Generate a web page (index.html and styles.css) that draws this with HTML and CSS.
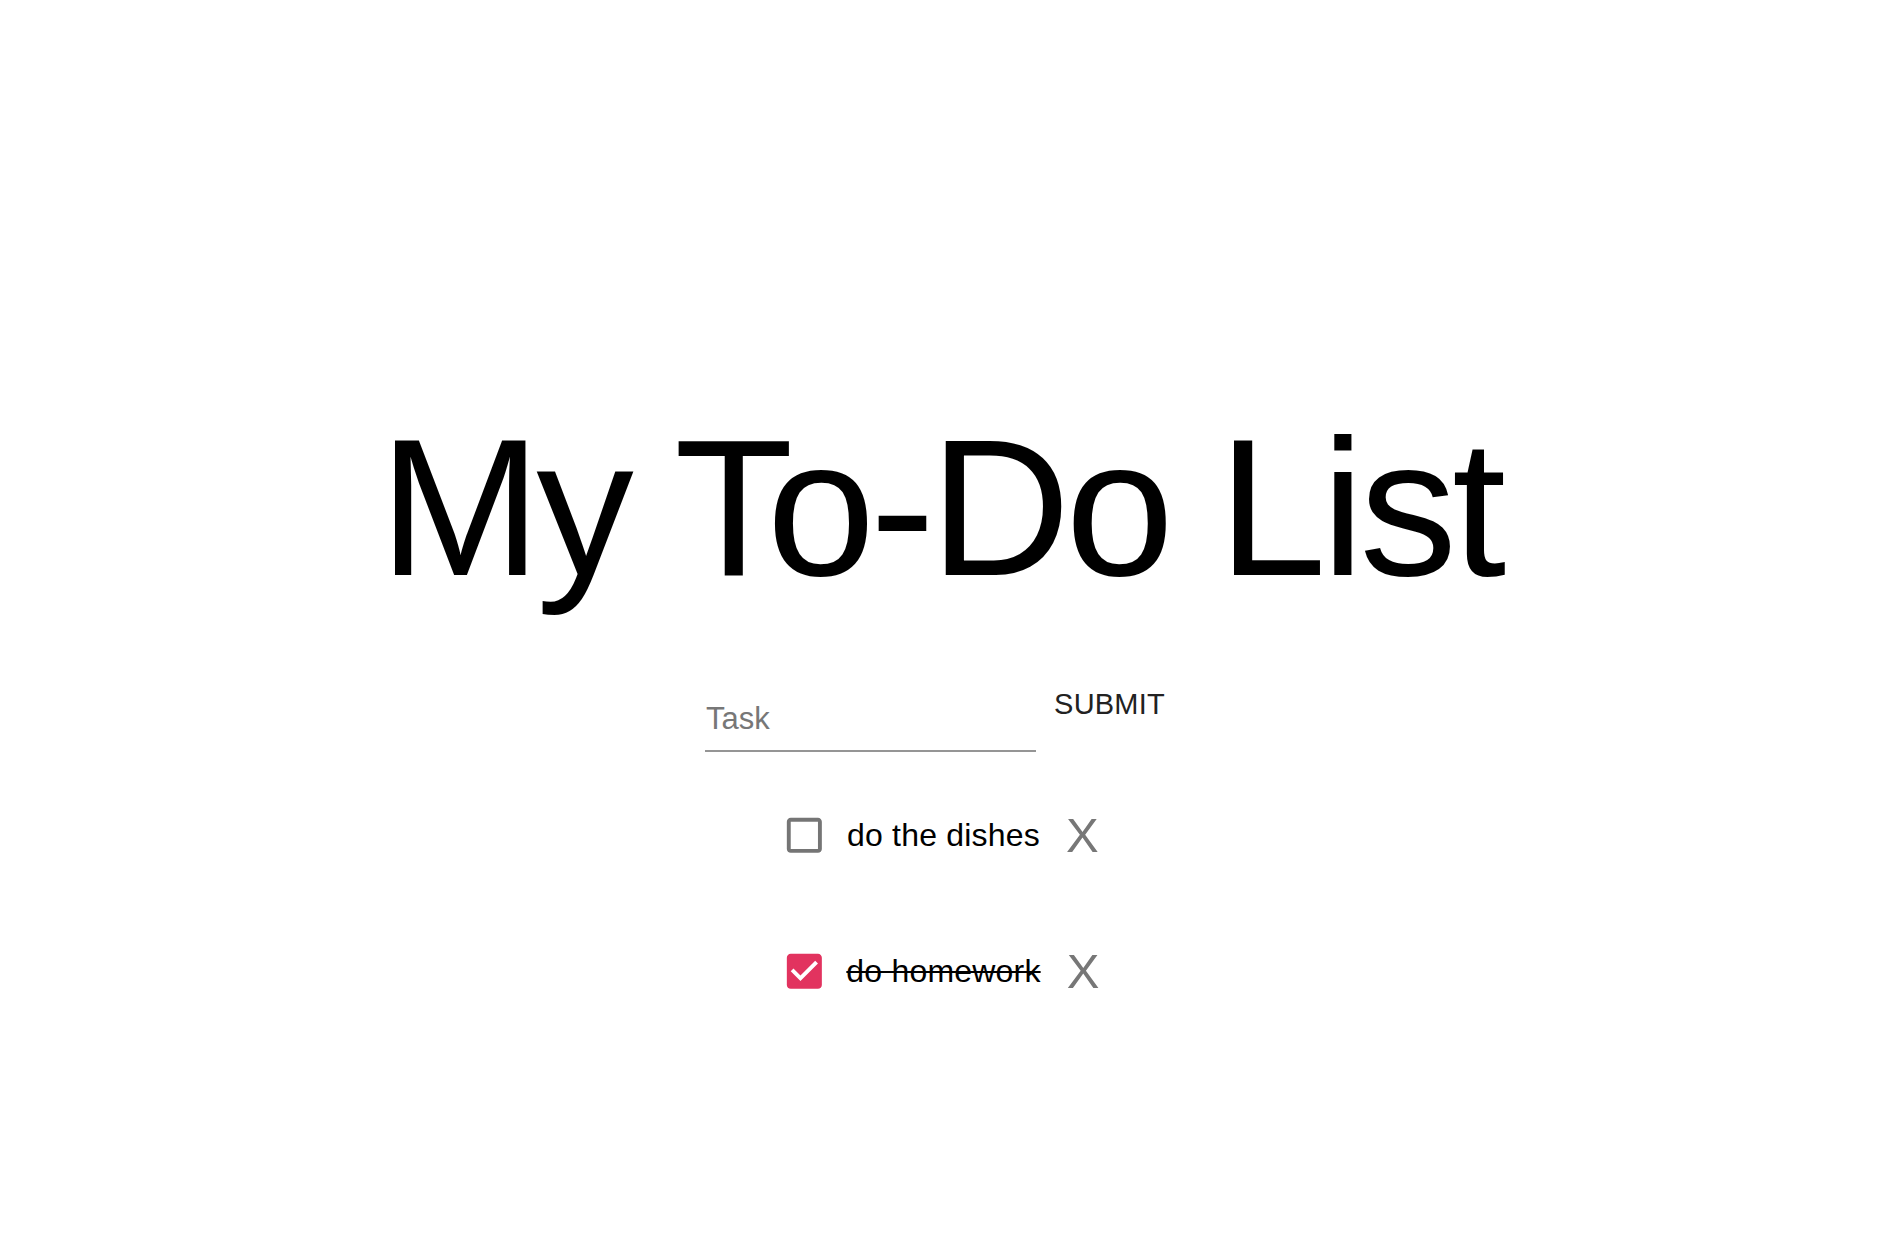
FILE: index.html
```html
<!DOCTYPE html>
<html lang="en">
<head>
<meta charset="utf-8">
<title>My To-Do List</title>
<link rel="stylesheet" href="styles.css">
</head>
<body>
<main class="app">
  <h1 class="title">My To-Do List</h1>
  <form class="task-form">
    <div class="field"><input class="field-input" type="text" placeholder="Task"></div>
    <button class="submit" type="button">SUBMIT</button>
  </form>
  <ul class="tasks">
    <li class="task">
      <svg class="check" viewBox="0 0 24 24"><path class="check-off" d="M19 5v14H5V5h14m0-2H5c-1.11 0-2 .9-2 2v14c0 1.1.89 2 2 2h14c1.1 0 2-.9 2-2V5c0-1.1-.9-2-2-2z"/></svg>
      <span class="task-text">do the dishes</span>
      <button class="remove" type="button">X</button>
    </li>
    <li class="task">
      <svg class="check" viewBox="0 0 24 24"><path class="check-on" d="M19 3H5c-1.11 0-2 .9-2 2v14c0 1.1.89 2 2 2h14c1.11 0 2-.9 2-2V5c0-1.1-.89-2-2-2zm-9 14l-5-5 1.41-1.41L10 14.170l7.59-7.59L19 8l-9 9z"/></svg>
      <span class="task-text done">do homework</span>
      <button class="remove" type="button">X</button>
    </li>
  </ul>
</main>
</body>
</html>
```

FILE: styles.css
```css
html, body {
  margin: 0;
  padding: 0;
  background: #ffffff;
}

body {
  font-family: "Liberation Sans", Arial, Helvetica, sans-serif;
  color: #000;
}

.app {
  display: flex;
  flex-direction: column;
  align-items: center;
  padding-top: 410px;
}

.title {
  margin: 0;
  font-size: 195px;
  font-weight: 400;
  line-height: 1;
  letter-spacing: -5.1px;
  color: #000;
}

.task-form {
  display: flex;
  align-items: flex-start;
  margin-top: 85px;
}

.field {
  width: 331px;
  padding-top: 13px;
  border-bottom: 2px solid #959595;
}

.field-input {
  display: block;
  width: 100%;
  box-sizing: border-box;
  border: 0;
  outline: none;
  margin: 0;
  padding: 0 0 16px 1px;
  height: 47px;
  font-family: inherit;
  font-size: 31px;
  line-height: 31px;
  color: #000;
  background: transparent;
}

.field-input::placeholder {
  color: #777777;
  opacity: 1;
}

.submit {
  margin: 0;
  border: 0;
  background: transparent;
  padding: 0 10px 0 18px;
  font-family: inherit;
  font-size: 29px;
  line-height: 29px;
  letter-spacing: 0.2px;
  color: #222222;
  cursor: pointer;
}

.tasks {
  list-style: none;
  margin: 53px 0 0;
  padding: 0;
  display: flex;
  flex-direction: column;
  align-items: center;
  gap: 76px;
}

.task {
  display: flex;
  align-items: center;
  height: 60px;
}

.check {
  width: 46.7px;
  height: 46.7px;
  display: block;
  margin-right: 19px;
}

.check-off {
  fill: #757575;
}

.check-on {
  fill: #e2335f;
}

.task-text {
  font-size: 32px;
  line-height: 1;
  letter-spacing: 0.2px;
  color: #000;
}

.task-text.done {
  text-decoration: line-through;
  text-decoration-thickness: 2px;
}

.remove {
  margin: 0 0 0 26px;
  padding: 0;
  border: 0;
  background: transparent;
  font-family: inherit;
  font-size: 49px;
  line-height: 1;
  color: #777777;
  cursor: pointer;
}
```
